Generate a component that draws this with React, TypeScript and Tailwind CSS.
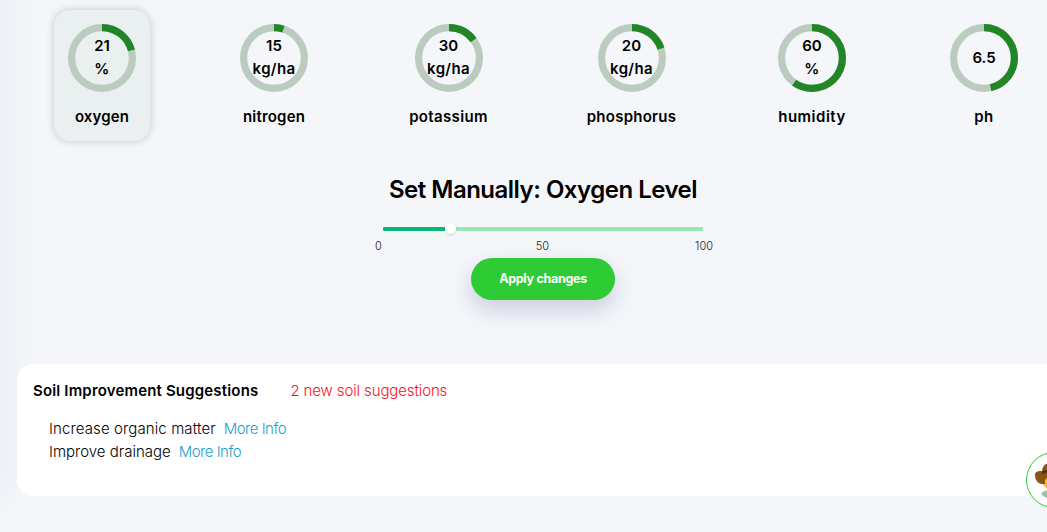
import React from 'react';

type Metric = {
  name: string;
  value: string;
  unit?: string;
  percent: number;
  width: string;
  labelTracking: string;
  active?: boolean;
};

const metrics: Metric[] = [
  { name: 'oxygen', value: '21', unit: '%', percent: 21, width: 'w-24', labelTracking: 'tracking-[0.15px]', active: true },
  { name: 'nitrogen', value: '15', unit: 'kg/ha', percent: 5, width: 'w-24', labelTracking: 'tracking-[0.2px]' },
  { name: 'potassium', value: '30', unit: 'kg/ha', percent: 15, width: 'w-[101px]', labelTracking: 'tracking-[0.35px]' },
  { name: 'phosphorus', value: '20', unit: 'kg/ha', percent: 20, width: 'w-[113px]', labelTracking: 'tracking-[0.25px]' },
  { name: 'humidity', value: '60', unit: '%', percent: 60, width: 'w-24', labelTracking: 'tracking-[0.5px]' },
  { name: 'ph', value: '6.5', percent: 46.5, width: 'w-24', labelTracking: 'tracking-[0.5px]' },
];

function Ring({ metric }: { metric: Metric }) {
  return (
    <div className="grid size-[68px] shrink-0 place-items-center">
      <svg viewBox="0 0 68 68" className="col-start-1 row-start-1 size-[68px] -rotate-90">
        <circle cx="34" cy="34" r="30.4" fill="none" stroke="#bbcbbf" strokeWidth="7.2" />
        <circle
          cx="34"
          cy="34"
          r="30.4"
          fill="none"
          stroke="#228526"
          strokeWidth="7.2"
          pathLength={100}
          strokeDasharray={`${metric.percent} 100`}
        />
      </svg>
      <div className="z-10 col-start-1 row-start-1 pb-0.5 text-center text-[15px] leading-[23px] font-semibold">
        <div>{metric.value}</div>
        {metric.unit && <div className="tracking-[0.35px]">{metric.unit}</div>}
      </div>
    </div>
  );
}

function MetricCard({ metric }: { metric: Metric }) {
  return (
    <div
      className={`flex h-[131px] shrink-0 flex-col items-center rounded-[16px] pt-3.5 ${metric.width} ${
        metric.active ? 'bg-[#e9f0ef] shadow-[0_0_8px_rgba(0,0,0,0.2)]' : ''
      }`}
    >
      <Ring metric={metric} />
      <div className={`mt-[13px] text-[15px] leading-[23px] font-semibold ${metric.labelTracking}`}>{metric.name}</div>
    </div>
  );
}

function LevelSlider() {
  return (
    <div className="w-[320px]">
      <div className="flex h-[13px] items-center">
        <div className="h-1 w-[62px] rounded-l-[1px] bg-[#07b977]" />
        <div className="z-10 size-[11px] shrink-0 rounded-full bg-white shadow-[0_1px_2px_rgba(0,0,0,0.15)]" />
        <div className="h-1 flex-1 rounded-r-[1px] bg-[#98e8b5]" />
      </div>
      <div className="-mx-2.5 mt-1 flex h-[15px] justify-between text-[11px] leading-[15px] font-light text-[#222]">
        <span className="pl-0.5">0</span>
        <span className="pl-2">50</span>
        <span>100</span>
      </div>
    </div>
  );
}

function Suggestion({ text, tracking }: { text: string; tracking: string }) {
  return (
    <li className="flex gap-2 text-[15px] leading-[23px] font-light">
      <span className={tracking}>{text}</span>
      <a className="tracking-[-0.5px] text-[#1a9fca]">More Info</a>
    </li>
  );
}

function FarmerButton() {
  return (
    <button className="absolute top-[452px] left-[1026px] size-14 overflow-hidden rounded-full border border-[#2dcc35] bg-white">
      <svg viewBox="0 0 54 54" className="size-[54px]">
        <circle cx="27" cy="26" r="12" fill="#f8bd25" />
        <path d="M8 22C8 18 12 18 15 18C16 11 19 9 27 12C35 9 38 11 39 18C42 18 46 18 46 22C46 28 42 32 36 31Q37 23 27 22Q17 23 18 31C12 32 8 28 8 22Z" fill="#8a5414" />
        <path d="M15 18Q27 14 39 18V21Q27 17 15 21Z" fill="#58340d" />
        <path d="M14 41Q16 37 27 37Q38 37 40 41Q36 46 27 46Q18 46 14 41Z" fill="#9bc3aa" />
      </svg>
    </button>
  );
}

export default function App() {
  return (
    <main className="relative flex h-[532px] w-[1047px] flex-col overflow-hidden bg-[#f4f6fa] font-['Inter',sans-serif] text-black">
      <div className="absolute top-[-40px] left-[-40px] h-[535px] w-10 rounded-br-[20px] shadow-[0_0_40px_rgba(200,222,232,0.4)]" />

      <section className="relative flex gap-[76px] pt-2.5 pl-[54px]">
        {metrics.map((metric) => (
          <MetricCard key={metric.name} metric={metric} />
        ))}
      </section>

      <section className="relative mt-8 flex w-[1086px] flex-col items-center">
        <h2 className="text-[24px] leading-[34px] font-semibold tracking-[-0.5px]">Set Manually: Oxygen Level</h2>
        <div className="mt-[15px]">
          <LevelSlider />
        </div>
        <button className="mt-1 h-[42px] w-36 rounded-full bg-[#2dcc35] text-[12.5px] font-bold tracking-[-0.3px] text-white shadow-[0_10px_22px_rgba(30,20,100,0.18)]">
          Apply changes
        </button>
      </section>

      <section className="relative mt-16 ml-[17px] h-[132px] w-[1060px] rounded-[16px] bg-white px-4 pt-[15px]">
        <div className="flex gap-8 text-[15px] leading-[23px]">
          <h3 className="font-semibold tracking-[0.17px]">Soil Improvement Suggestions</h3>
          <span className="font-light tracking-[-0.12px] text-[#f5121d]">2 new soil suggestions</span>
        </div>
        <ul className="mt-[15px] pl-4">
          <Suggestion text="Increase organic matter" tracking="tracking-[0.11px]" />
          <Suggestion text="Improve drainage" tracking="tracking-[0px]" />
        </ul>
      </section>

      <FarmerButton />
    </main>
  );
}
